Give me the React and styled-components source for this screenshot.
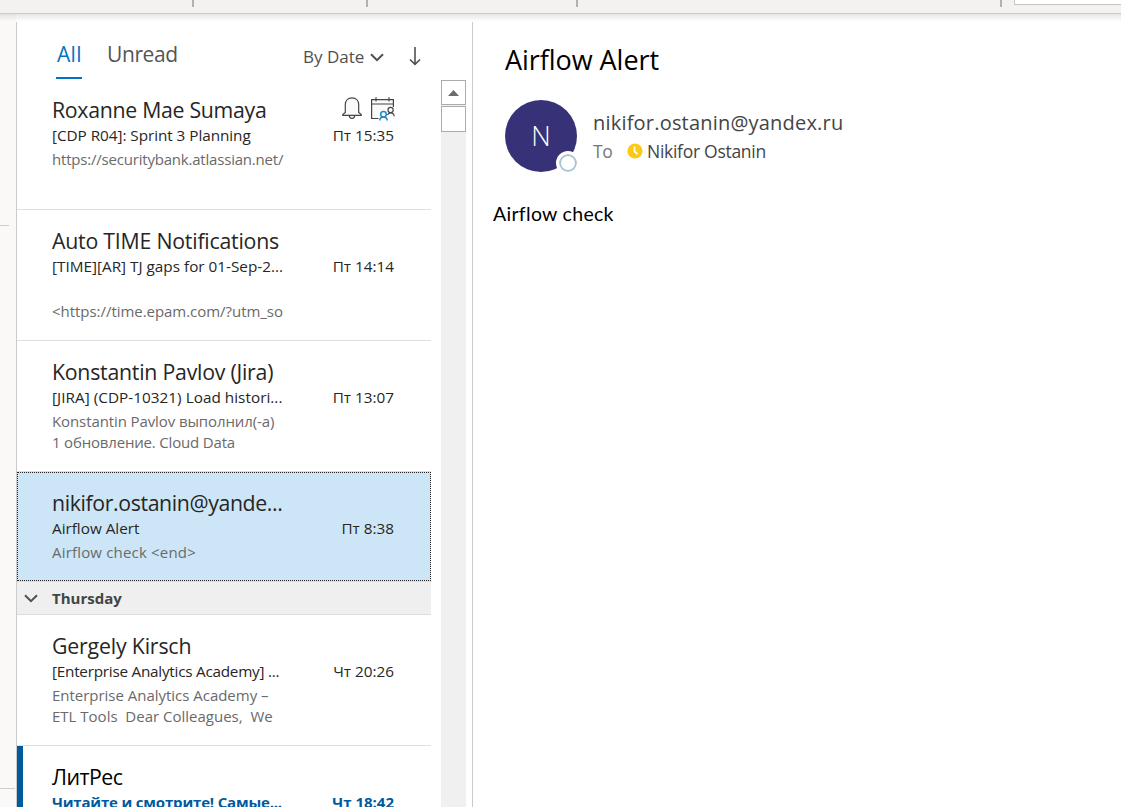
import React from "react";
import styled, { createGlobalStyle } from "styled-components";

const GlobalStyle = createGlobalStyle`
  * { box-sizing: border-box; }
  body { margin: 0; background: #fff; overflow: hidden; font-family: "Open Sans", "Noto Sans", sans-serif; }
`;

const Window = styled.div`
  display: flex;
  flex-direction: column;
  width: 1121px;
  height: 807px;
  overflow: hidden;
`;

const Ribbon = styled.header`
  display: flex;
  align-items: flex-start;
  height: 14px;
  flex: none;
  background: #f3f2f1;
  border-bottom: 1px solid #cbcbca;
`;

const RibbonGroup = styled.div`
  width: ${(p) => p.$width}px;
  height: 7px;
  flex: none;
  border-right: 2px solid #b3b1b0;
`;

const RibbonSearch = styled.div`
  flex: 1;
  height: 5px;
  margin-left: 12px;
  background: #fff;
  border: solid #c6c4c3;
  border-width: 0 0 1px 1px;
`;

const Body = styled.main`
  display: flex;
  flex: 1;
  min-height: 0;
  background: linear-gradient(#e6e5e4, #f4f4f4 4px, #fff 8px);
`;

const FolderStrip = styled.aside`
  display: flex;
  flex-direction: column;
  width: 16px;
  flex: none;
  background: linear-gradient(#e2e1e0, #f1f0ef 4px, #faf9f8 8px);
`;

const FolderDivider = styled.div`
  width: ${(p) => p.$width}px;
  height: 1px;
  margin-top: ${(p) => p.$gap}px;
  background: #cfcdcb;
`;

const MailPane = styled.section`
  display: flex;
  flex-direction: column;
  width: 457px;
  flex: none;
  margin-top: 8px;
  border: solid #cbcbcb;
  border-width: 0 1px;
`;

const Filters = styled.nav`
  display: flex;
  height: 57px;
  flex: none;
  padding-left: 39px;
  color: #505050;
`;

const FilterTab = styled.div`
  width: ${(p) => p.$width}px;
  height: 57px;
  padding-top: 18px;
  margin-right: 25px;
  font-size: 21px;
  line-height: 28px;
  white-space: nowrap;
  letter-spacing: ${(p) => p.$tracking}px;
  color: ${(p) => (p.$active ? "#0072c6" : "#555")};
  border-bottom: ${(p) => (p.$active ? "2px solid #0072c6" : "0")};
  padding-left: ${(p) => (p.$active ? "1px" : "0")};
`;

const SortButton = styled.div`
  display: flex;
  align-items: center;
  gap: 6px;
  width: 86px;
  height: 24px;
  margin: 23px 20px 0 98px;
  font-size: 17px;
  line-height: 24px;
  white-space: nowrap;
`;

const SortDirection = styled.div`
  margin-top: 25px;
  line-height: 0;
`;

const ListArea = styled.div`
  display: flex;
  flex: 1;
  min-height: 0;
`;

const MailList = styled.div`
  width: 414px;
  flex: none;
  overflow: hidden;
`;

const MailItem = styled.article`
  height: ${(p) => (p.$selected ? 109 : 131)}px;
  padding: ${(p) => (p.$selected ? "17px 36px 0 34px" : "18px 37px 0 35px")};
  border-bottom: 1px solid #e1dfdd;
  ${(p) => p.$selected && `
    background: #cde6f7;
    border: 1px dotted #222;
  `}
  ${(p) => p.$unread && `
    border-left: 6px solid #005a9e;
    padding-left: 29px;
  `}
`;

const Sender = styled.div`
  font-size: 21.3px;
  line-height: 26px;
  letter-spacing: ${(p) => p.$tracking}px;
  color: ${(p) => (p.$unread ? "#000" : "#262626")};
  white-space: nowrap;
`;

const SplitRow = styled.div`
  display: flex;
  justify-content: space-between;
`;

const ItemIcons = styled.div`
  display: flex;
  gap: 9px;
  height: 26px;
  margin-right: -1px;
`;

const Subject = styled.div`
  font-size: ${(p) => (p.$unread ? 15 : 15.3)}px;
  font-weight: ${(p) => (p.$unread ? 700 : 400)};
  line-height: 24px;
  letter-spacing: ${(p) => p.$tracking || 0}px;
  color: ${(p) => (p.$unread ? "#005a9e" : "#262626")};
  white-space: nowrap;
`;

const Preview = styled.div`
  height: 21px;
  margin-top: ${(p) => (p.$first ? 2 : 0)}px;
  font-size: 15px;
  line-height: 21px;
  letter-spacing: ${(p) => p.$tracking || 0}px;
  color: #6a6a6a;
  white-space: pre;
`;

const GroupHeader = styled.div`
  display: flex;
  align-items: center;
  gap: 13px;
  height: 34px;
  padding-left: 6px;
  background: #efefef;
  border-top: 1px solid #e1dfdd;
  border-bottom: 1px solid #dcdcdc;
  font-size: 15px;
  font-weight: 700;
  color: #444;
`;

const Scrollbar = styled.div`
  display: flex;
  flex-direction: column;
  gap: 1px;
  width: 25px;
  margin: 1px 0 0 10px;
  background: #f0f0f0;
`;

const ScrollBox = styled.div`
  display: flex;
  align-items: center;
  justify-content: center;
  height: ${(p) => p.$height}px;
  background: #fff;
  border: 1px solid #ababab;
`;

const ReadingPane = styled.section`
  flex: 1;
  padding: 24px 0 0 20px;
`;

const MessageTitle = styled.h1`
  margin: 0 0 0 12px;
  font-size: 27px;
  font-weight: 400;
  line-height: 44px;
  letter-spacing: -0.05px;
  color: #000;
`;

const MessageHead = styled.div`
  display: flex;
  gap: 16px;
  height: 72px;
  margin: 18px 0 0 12px;
`;

const Avatar = styled.div`
  position: relative;
  width: 72px;
  height: 72px;
  border-radius: 50%;
  background: #373277;
  color: #fff;
  font-size: 27px;
  font-weight: 300;
  line-height: 72px;
  text-align: center;
`;

const Presence = styled.div`
  position: absolute;
  right: -3px;
  bottom: -3px;
  width: 24px;
  height: 24px;
  border-radius: 50%;
  border: 3px solid #fff;
  background: #fff;
  box-shadow: inset 0 0 0 2px #a9c4cf;
`;

const SenderAddress = styled.div`
  margin-top: 9px;
  font-size: 20px;
  line-height: 28px;
  letter-spacing: 0.2px;
  color: #444;
`;

const Recipient = styled.div`
  display: flex;
  align-items: center;
  height: 28px;
  font-size: 17.5px;
  letter-spacing: -0.28px;
  color: #444;
`;

const ToLabel = styled.span`
  width: 34px;
  color: #777;
`;

const RecipientName = styled.span`
  margin-left: 4px;
`;

const MessageBody = styled.p`
  margin: 30px 0 0;
  font-family: Lato, sans-serif;
  font-size: 19.5px;
  line-height: 24px;
  letter-spacing: 0.3px;
  color: #000;
`;

const Chevron = ({ width = 14 }) => (
  <svg width={width} height="9" viewBox="0 0 14 9" fill="none" stroke="#505050" strokeWidth="2">
    <path d="M1 1.2 7 7.2 13 1.2" />
  </svg>
);

const ArrowDown = () => (
  <svg width="12" height="19" viewBox="0 0 12 19" fill="none" stroke="#505050" strokeWidth="1.6">
    <path d="M6 0V17M1 12.5 6 17.3 11 12.5" />
  </svg>
);

const Bell = () => (
  <svg width="20" height="23" viewBox="0 0 20 23" fill="none" stroke="#444" strokeWidth="1.2">
    <path fill="#fafafa" d="M.8 18.4V17.6L3.3 15.5V7.7C3.3 3.4 6.3.9 10 .9s6.7 2.5 6.7 6.8V15.5L19.2 17.6V18.4Z" />
    <path d="M7.3 18.6C7.3 22.4 12.7 22.4 12.7 18.6" />
  </svg>
);

const MeetingIcon = () => (
  <svg width="24" height="24" viewBox="0 0 24 24" fill="none" stroke="#444" strokeWidth="1.2">
    <path fill="#fafafa" stroke="none" d="M1 3H22V11L15 15 8 21H1Z" />
    <path d="M7.5 21.5H.6V2.6H22.4V10M.6 7H22.4M5 .3V4.5M18 .3V4.5" />
    <circle cx="19.6" cy="13" r="2.6" fill="#fff" />
    <path d="M16.5 18C17 16.5 18 15.8 19.6 15.8 21.7 15.8 23 17 23.2 19.2" />
    <g stroke="#1e8bcd" strokeWidth="1.5">
      <circle cx="12.5" cy="17.2" r="2.8" fill="#fff" />
      <path d="M8.7 23.5C9 21 10.3 20 12.5 20S16 21 16.3 23.5" />
    </g>
  </svg>
);

const AwayBadge = () => (
  <svg width="16" height="16" viewBox="0 0 16 16">
    <circle cx="8" cy="8" r="7.6" fill="#fcc917" />
    <path d="M7.5 3.5V8.500L10.500 11" fill="none" stroke="#fff" strokeWidth="1.7" />
  </svg>
);

const friday = [
  { from: ["Roxanne Mae Sumaya", -0.3], subject: ["[CDP R04]: Sprint 3 Planning", -0.05], time: "Пт 15:35", lines: [["https://securitybank.atlassian.net/", -0.2]], meeting: true },
  { from: ["Auto TIME Notifications", -0.22], subject: ["[TIME][AR] TJ gaps for 01-Sep-2...", 0], time: "Пт 14:14", lines: [["", 0], ["<https://time.epam.com/?utm_so", -0.04]] },
  { from: ["Konstantin Pavlov (Jira)", -0.24], subject: ["[JIRA] (CDP-10321) Load histori...", 0.03], time: "Пт 13:07", lines: [["Konstantin Pavlov выполнил(-а)", -0.1], ["1 обновление. Cloud Data", -0.18]] },
  { from: ["nikifor.ostanin@yande...", -0.38], subject: ["Airflow Alert", -0.02], time: "Пт 8:38", lines: [["Airflow check <end>", 0.18]], selected: true },
];

const thursday = [
  { from: ["Gergely Kirsch", -0.18], subject: ["[Enterprise Analytics Academy] ...", -0.25], time: "Чт 20:26", lines: [["Enterprise Analytics Academy –", -0.02], ["ETL Tools  Dear Colleagues,  We", 0]] },
  { from: ["ЛитРес", -0.5], subject: ["Читайте и смотрите! Самые...", -0.18], time: "Чт 18:42", lines: [], unread: true },
];

const Mail = ({ mail }) => (
  <MailItem $selected={mail.selected} $unread={mail.unread}>
    <SplitRow>
      <Sender $tracking={mail.from[1]} $unread={mail.unread}>{mail.from[0]}</Sender>
      {mail.meeting && <ItemIcons><Bell /><MeetingIcon /></ItemIcons>}
    </SplitRow>
    <SplitRow>
      <Subject $tracking={mail.subject[1]} $unread={mail.unread}>{mail.subject[0]}</Subject>
      <Subject $unread={mail.unread}>{mail.time}</Subject>
    </SplitRow>
    {mail.lines.map(([text, tracking], i) => (
      <Preview key={i} $first={i === 0} $tracking={tracking}>{text}</Preview>
    ))}
  </MailItem>
);

export default function App() {
  return (
    <Window>
      <GlobalStyle />
      <Ribbon>
        <RibbonGroup $width={194} />
        <RibbonGroup $width={174} />
        <RibbonGroup $width={210} />
        <RibbonGroup $width={424} />
        <RibbonSearch />
      </Ribbon>
      <Body>
        <FolderStrip>
          <FolderDivider $gap={211} $width={9} />
          <FolderDivider $gap={562} $width={15} />
        </FolderStrip>
        <MailPane>
          <Filters>
            <FilterTab $active $width={26} $tracking={0.3}>All</FilterTab>
            <FilterTab $width={73} $tracking={-0.4}>Unread</FilterTab>
            <SortButton>By Date<Chevron /></SortButton>
            <SortDirection><ArrowDown /></SortDirection>
          </Filters>
          <ListArea>
            <MailList>
              {friday.map((mail) => <Mail key={mail.time} mail={mail} />)}
              <GroupHeader><Chevron width={16} />Thursday</GroupHeader>
              {thursday.map((mail) => <Mail key={mail.time} mail={mail} />)}
            </MailList>
            <Scrollbar>
              <ScrollBox $height={25}>
                <svg width="11" height="6" viewBox="0 0 11 6"><path d="M0 6 5.5 0 11 6Z" fill="#6d6d6d" /></svg>
              </ScrollBox>
              <ScrollBox $height={26} />
            </Scrollbar>
          </ListArea>
        </MailPane>
        <ReadingPane>
          <MessageTitle>Airflow Alert</MessageTitle>
          <MessageHead>
            <Avatar>N<Presence /></Avatar>
            <div>
              <SenderAddress>nikifor.ostanin@yandex.ru</SenderAddress>
              <Recipient><ToLabel>To</ToLabel><AwayBadge /><RecipientName>Nikifor Ostanin</RecipientName></Recipient>
            </div>
          </MessageHead>
          <MessageBody>Airflow check</MessageBody>
        </ReadingPane>
      </Body>
    </Window>
  );
}
